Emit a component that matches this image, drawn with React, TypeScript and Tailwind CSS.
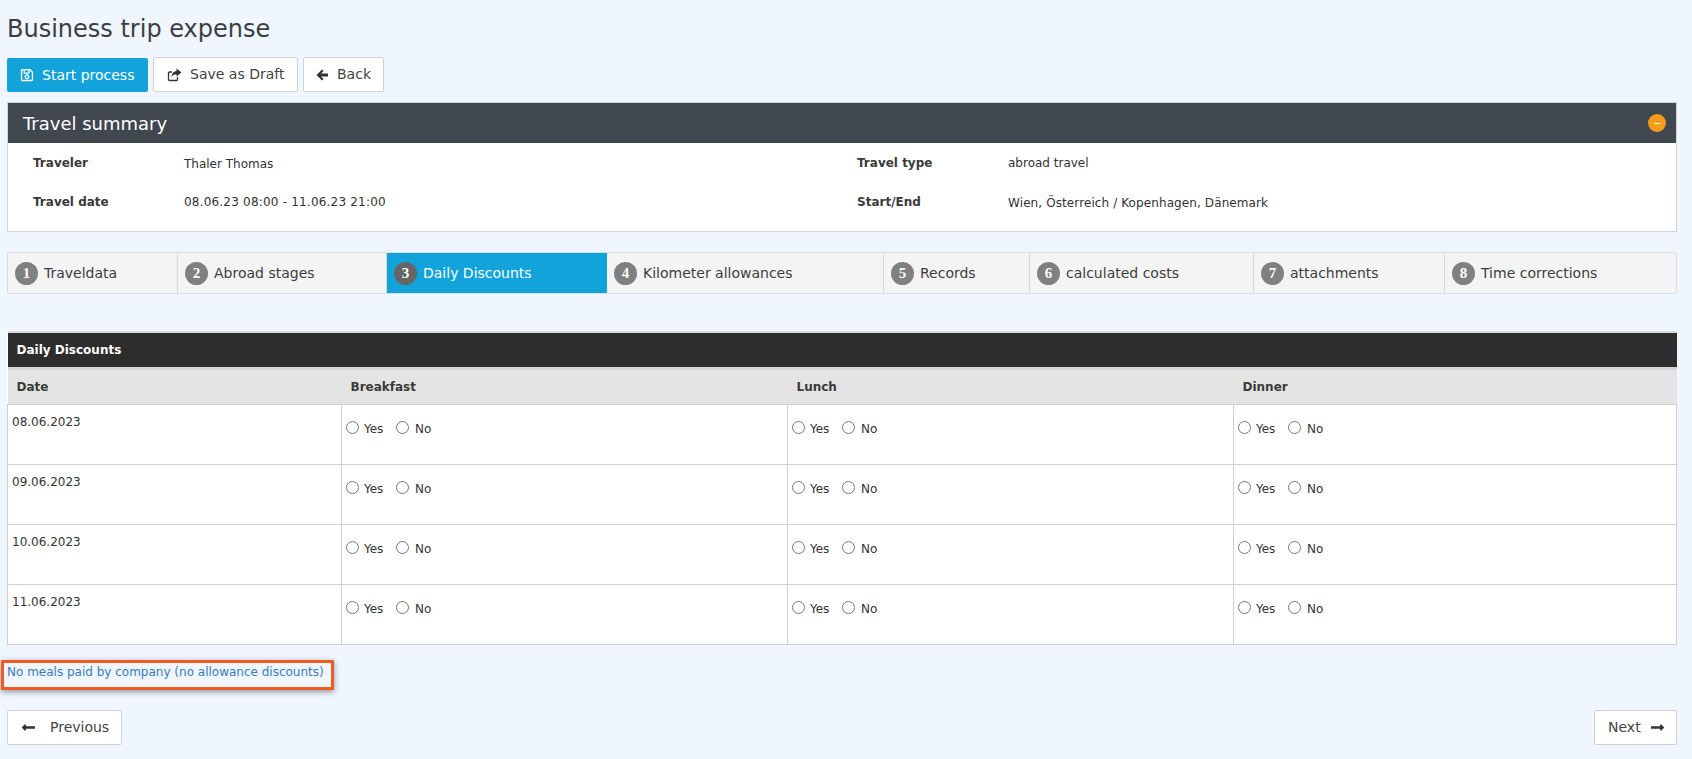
import React from "react";
import { FaRegSave, FaLongArrowAltLeft, FaLongArrowAltRight } from "react-icons/fa";

const tabs = [
  { label: "Traveldata", width: "w-[170px]" },
  { label: "Abroad stages", width: "w-[209px]" },
  { label: "Daily Discounts", width: "w-[220px]", active: true },
  { label: "Kilometer allowances", width: "w-[277px]" },
  { label: "Records", width: "w-[146px]" },
  { label: "calculated costs", width: "w-[224px]" },
  { label: "attachments", width: "w-[191px]" },
  { label: "Time corrections", width: "flex-1" },
];

const days = ["08.06.2023", "09.06.2023", "10.06.2023", "11.06.2023"];
const meals = ["breakfast", "lunch", "dinner"];

function Choice({ name }: { name: string }) {
  return (
    <div className="flex items-start pt-[16px] pl-[4px]">
      <input type="radio" name={name} className="w-[13px] h-[13px] m-0" />
      <span className="ml-[5px] leading-[16px] w-[32px]">Yes</span>
      <input type="radio" name={name} className="w-[13px] h-[13px] m-0" />
      <span className="ml-[6px] leading-[16px]">No</span>
    </div>
  );
}

export default function App() {
  return (
    <div className="min-h-screen bg-[#eff6fe] pl-[7px] pr-[15px] text-[#333] text-[12px] font-['DejaVu_Sans',sans-serif]">
      <h1 className="pt-[14px] text-[24px] leading-[30px] text-[#3b3f44]">
        Business trip expense
      </h1>

      <div className="flex items-end gap-[5px] mt-[13px]">
        <button className="flex items-center w-[141px] h-[34px] pl-[13px] rounded-[2px] bg-[#11a3d9] text-white text-[14px]">
          <FaRegSave className="text-[14px]" />
          <span className="ml-[8px]">Start process</span>
        </button>
        <button className="flex items-center w-[145px] h-[35px] pl-[12px] rounded-[2px] border border-[#cfd3d6] bg-white text-[14px] text-[#444]">
          <svg viewBox="0 0 16 14" className="w-[16px] h-[14px]">
            <path
              d="M11.5 9v2.5a1 1 0 0 1-1 1h-7a1 1 0 0 1-1-1V5a1 1 0 0 1 1-1H6"
              fill="none"
              stroke="#333"
              strokeWidth="1.3"
            />
            <path d="M10.5 0.5l5 4-5 4V6.3C8 6.3 6.3 7.3 5.6 9.6 5.6 6 7.3 3.4 10.5 3.1z" fill="#333" />
          </svg>
          <span className="ml-[8px]">Save as Draft</span>
        </button>
        <button className="flex items-center w-[81px] h-[35px] pl-[12px] rounded-[2px] border border-[#cfd3d6] bg-white text-[14px] text-[#444]">
          <svg viewBox="0 0 12 12" className="w-[12px] h-[12px]">
            <path d="M6 0.5L0.5 6 6 11.5l1.6-1.6L5 7.4h7V4.6H5l2.6-2.5z" fill="#333" />
          </svg>
          <span className="ml-[9px]">Back</span>
        </button>
      </div>

      <section className="mt-[10px] h-[130px] border border-[#d0d3d6] bg-white">
        <div className="flex items-center justify-between h-[40px] pl-[15px] pr-[10px] bg-[#40474f] text-white text-[18px]">
          <span>Travel summary</span>
          <span className="flex items-center justify-center w-[18px] h-[18px] rounded-full bg-[#f59c1a]">
            <span className="w-[6px] h-px bg-white" />
          </span>
        </div>
        <div className="grid grid-cols-[151px_673px_151px_1fr] pl-[25px] pt-[10px] gap-y-[18px] leading-[20px]">
          <b className="text-[#3a3a3a]">Traveler</b>
          <span className="mt-px">Thaler Thomas</span>
          <b className="text-[#3a3a3a]">Travel type</b>
          <span>abroad travel</span>
          <b className="text-[#3a3a3a]">Travel date</b>
          <span className="tracking-[0.2px]">08.06.23 08:00 - 11.06.23 21:00</span>
          <b className="text-[#3a3a3a]">Start/End</b>
          <span className="mt-px tracking-[0.1px]">Wien, Österreich / Kopenhagen, Dänemark</span>
        </div>
      </section>

      <nav className="flex mt-[20px] h-[42px] border border-[#dcdfe1] rounded-[2px] bg-[#f4f4f4] text-[14px] text-[#3d3d3d]">
        {tabs.map((tab, i) => (
          <div
            key={tab.label}
            className={`flex items-center pl-[7px] ${tab.width} ${
              tab.active ? "bg-[#11a3d9] text-white" : "border-r border-[#d8d8d8] last:border-r-0"
            }`}
          >
            <span
              className={`flex items-center justify-center w-[23px] h-[23px] rounded-full text-white text-[15px] font-bold font-['Liberation_Serif',serif] ${
                tab.active ? "bg-[#666]" : "bg-[#808080]"
              }`}
            >
              {i + 1}
            </span>
            <span className="ml-[6px]">{tab.label}</span>
          </div>
        ))}
      </nav>

      <table className="mt-[37px] w-full table-fixed border-collapse border-t-2 border-[#d9d9d9] bg-white">
        <colgroup>
          <col className="w-[334px]" />
          <col className="w-[446px]" />
          <col className="w-[446px]" />
          <col />
        </colgroup>
        <thead>
          <tr>
            <th
              colSpan={4}
              className="h-[36px] pl-[9px] bg-[#2d2d2d] text-left text-white border-b-[3px] border-[#d4d4d4]"
            >
              Daily Discounts
            </th>
          </tr>
          <tr className="h-[36px] bg-[#e4e4e4] text-left text-[#3a3a3a] border-b border-[#cfcfcf]">
            <th className="pl-[9px]">Date</th>
            <th className="pl-[9px]">Breakfast</th>
            <th className="pl-[9px]">Lunch</th>
            <th className="pl-[9px]">Dinner</th>
          </tr>
        </thead>
        <tbody>
          {days.map((day) => (
            <tr key={day} className="h-[60px] border border-[#d0d0d0]">
              <td className="align-top pl-[4px] pt-[9px] leading-[16px]">{day}</td>
              {meals.map((meal) => (
                <td key={meal} className="align-top border-l border-[#d0d0d0]">
                  <Choice name={`${day}-${meal}`} />
                </td>
              ))}
            </tr>
          ))}
        </tbody>
      </table>

      <div className="relative mt-[15px] -ml-[6px] w-[333px] h-[30px] border-[3px] border-[#f15a22] shadow-[0_2px_6px_rgba(0,0,0,0.4)] pl-[3px] leading-[18px] text-[#3a7cba]">
        No meals paid by company (no allowance discounts)
      </div>

      <div className="flex justify-between mt-[20px]">
        <button className="flex items-center w-[115px] h-[35px] pl-[13px] rounded-[2px] border border-[#cfd3d6] bg-white text-[14px] text-[#444]">
          <FaLongArrowAltLeft className="text-[15px] text-[#333]" />
          <span className="ml-[14px]">Previous</span>
        </button>
        <button className="flex items-center w-[83px] h-[35px] pl-[13px] rounded-[2px] border border-[#cfd3d6] bg-white text-[14px] text-[#444]">
          <span>Next</span>
          <FaLongArrowAltRight className="ml-[9px] text-[15px] text-[#333]" />
        </button>
      </div>
    </div>
  );
}
